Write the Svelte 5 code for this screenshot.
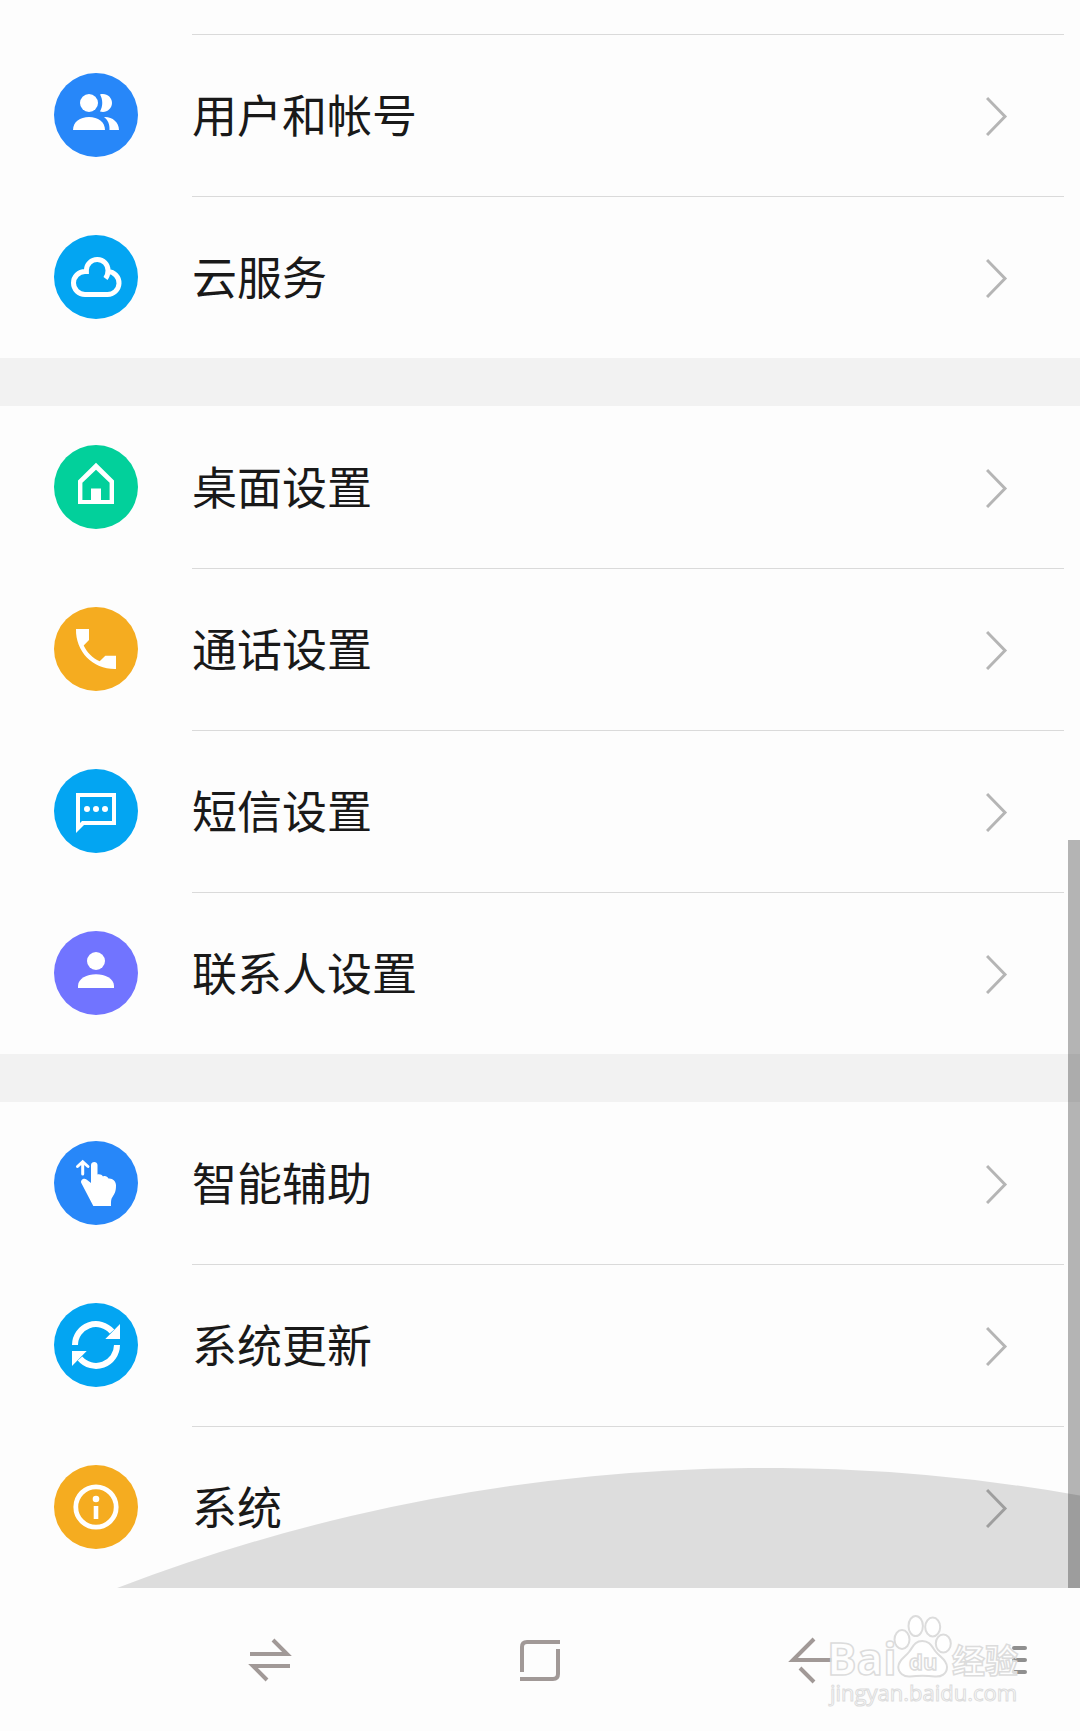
<script>
    const groups = [
        [
            { icon: "users", text: "用户和帐号", color: "#2787f9" },
            { icon: "cloud", text: "云服务", color: "#03a5f2" }
        ],
        [
            { icon: "home", text: "桌面设置", color: "#02d09b" },
            { icon: "phone", text: "通话设置", color: "#f5ac20" },
            { icon: "message", text: "短信设置", color: "#03a5f2" },
            { icon: "contact", text: "联系人设置", color: "#7174ff" }
        ],
        [
            { icon: "gesture", text: "智能辅助", color: "#2787f9" },
            { icon: "update", text: "系统更新", color: "#03a5f2" },
            { icon: "info", text: "系统", color: "#f5ac20" }
        ]
    ];

    let selected = $state("");
</script>

{#snippet glyph(name)}
    {#if name === "users"}
        <circle cx="35" cy="30" r="9" />
        <path d="M46 21.6C52 19.6 58 24 58 30S52 40.4 46 38.4C49 33.5 49 26.5 46 21.6Z" />
        <path d="M19 57C19 49 26 44 35 44S51 49 51 57Z" />
        <path d="M50 44C58 43.5 65 49 65 57H55.5C55.8 51.5 54 47 50 44Z" />
    {:else if name === "cloud"}
        <path class="line" stroke-width="5" d="M51.5 43.5C53 41.5 54 39 54 35.5A10.8 10.8 0 0 0 32.4 35V36.5H31A11.5 11.5 0 0 0 31 59.5H53A11.5 11.5 0 0 0 54 36.5" />
    {:else if name === "home"}
        <path fill-rule="evenodd" d="M42 17.7L60 35.5V59H24V35.5ZM42 24.7L28.4 37.8V55H37V43.5H47V55H55.6V37.8Z" />
    {:else if name === "phone"}
        <path d="M22 22H35V33L29.7 38.5C33 45.5 38.5 51 45.7 54.2L51.3 48.7H62V62C39 62.5 21.5 45 22 22Z" />
    {:else if name === "message"}
        <path fill-rule="evenodd" d="M22 24H62V56H30L22 64ZM26 28V54L28 52H58V28Z" />
        <circle cx="33" cy="40" r="3" />
        <circle cx="42" cy="40" r="3" />
        <circle cx="51" cy="40" r="3" />
    {:else if name === "contact"}
        <circle cx="42" cy="30" r="9" />
        <path d="M24 57V55C24 47.5 33 43.3 42 43.3S60 47.5 60 55V57Z" />
    {:else if name === "gesture"}
        <path class="line" stroke-width="3" stroke-linecap="round" d="M23.500 25.5L28.7 20.7L34 25.5M28.7 20.7V33" />
        <path d="M37 24C37 20 43.5 20 43.5 24V33.5C46 33 48 34 49 35.5C51 34.5 53.5 35.5 54.5 37.5C58.5 37 62 40 62 44.5C62 51 60.5 52.5 58.5 56C57 58 57 60 57 65H39.3L27.3 42C26 39 30 36.5 32.5 38.5L37 42Z" />
    {:else if name === "update"}
        <path class="line" stroke-width="6" d="M21 42A21 21 0 0 1 58 28.5M63 42A21 21 0 0 1 26 55.5" />
        <path d="M66 21V36H51.3ZM18 63V48H32.7Z" />
    {:else}
        <circle class="line" stroke-width="4.8" cx="42" cy="42" r="20.2" />
        <circle cx="42" cy="34" r="3.3" />
        <path d="M39.7 41H44.3V54H39.7Z" />
    {/if}
{/snippet}

<div class="screen">
    <main>
        {#each groups as group}
            <ul class="group">
                {#each group as item (item.text)}
                    <li>
                        <button class="row" onclick={() => (selected = item.text)}>
                            <svg class="icon" viewBox="0 0 84 84" aria-hidden="true">
                                <circle cx="42" cy="42" r="42" fill={item.color} />
                                {@render glyph(item.icon)}
                            </svg>
                            <span class="content">
                                <span class="label">{item.text}</span>
                                <svg class="chevron" viewBox="0 0 22 40" aria-hidden="true">
                                    <path d="M1 2L19 20.5L1 39" />
                                </svg>
                            </span>
                        </button>
                    </li>
                {/each}
            </ul>
        {/each}

        <!-- ripple coming up from the back key -->
        <svg class="ripple" viewBox="0 0 1080 120" preserveAspectRatio="none" aria-hidden="true">
            <path d="M117 120A1810 1810 0 0 1 1080 27.5V120Z" />
        </svg>
        <div class="scrollbar"></div>
    </main>

    <nav>
        <button aria-label="切换">
            <svg viewBox="0 0 48 48">
                <path d="M4 18H41L27 4M44 30H7L21 44" />
            </svg>
        </button>
        <button aria-label="主页">
            <svg viewBox="0 0 48 48">
                <path d="M6 36V11Q6 6 11 6H44M42 13V38Q42 43 37 43H4" />
            </svg>
        </button>
        <button aria-label="返回">
            <svg viewBox="0 0 48 48">
                <path d="M28 3L7 24H46M14 32L28 46" />
            </svg>
        </button>
        <button class="menu" aria-label="菜单">
            <svg viewBox="0 0 48 48">
                <path d="M26 12H37M26 24H37M26 36H37" />
            </svg>
        </button>

        <svg class="watermark" viewBox="0 0 206 100" aria-hidden="true">
            <text class="latin" x="3" y="64" font-size="44">Bai</text>
            <ellipse cx="78" cy="28.5" rx="7.5" ry="9.5" />
            <ellipse cx="91.7" cy="15" rx="7.2" ry="10" />
            <ellipse cx="108.7" cy="16" rx="7.5" ry="9.5" />
            <ellipse cx="119.3" cy="32.5" rx="7.5" ry="9" />
            <path d="M98.3 30C106 30 108 36 112 41C116 46 123 49 123 56C123 63 117 66 111 65.5C102 64.5 95 64.5 86 65.5C80 66 74.3 62 74.3 56C74.3 49 81 46 85 41C89 36 90.5 30 98.3 30Z" />
            <text class="latin" x="85" y="59" font-size="22">du</text>
            <text class="cjk" x="128" y="62" font-size="33">经验</text>
            <text class="site" x="6" y="90" font-size="22">jingyan.baidu.com</text>
        </svg>
    </nav>
</div>

<style>
:global(body) {
    margin: 0;
    background: #fdfdfd;
}

.screen {
    font-family: "Noto Sans CJK SC", sans-serif;
    color: #191919;
}

main {
    position: relative;
    padding-top: 34px;
}

.group {
    list-style: none;
    margin: 0;
    padding: 0;
}

.group + .group {
    border-top: 48px solid #f2f2f2;
}

button {
    border: 0;
    padding: 0;
    background: none;
    font: inherit;
    color: inherit;
    cursor: pointer;
}

.row {
    display: flex;
    align-items: center;
    width: 100%;
    height: 162px;
    padding: 0 16px 0 54px;
    gap: 54px;
    text-align: left;
}

.icon {
    flex: none;
    width: 84px;
    height: 84px;
    fill: white;
}

.icon .line {
    fill: none;
    stroke: white;
}

.content {
    flex: 1;
    display: flex;
    align-items: center;
    justify-content: space-between;
    box-sizing: border-box;
    height: 100%;
    padding-right: 56px;
    border-top: 1px solid #dadada;
}

.group + .group li:first-child .content {
    border-top-color: transparent;
}

.label {
    padding-bottom: 4px;
    font-size: 45px;
    line-height: 66px;
}

.chevron {
    width: 22px;
    height: 40px;
    fill: none;
    stroke: #b5b5b5;
    stroke-width: 3;
}

.ripple {
    position: absolute;
    left: 0;
    bottom: 0;
    width: 100%;
    height: 120px;
    fill: rgba(0, 0, 0, 0.125);
    pointer-events: none;
}

.scrollbar {
    position: absolute;
    right: 0;
    bottom: 0;
    width: 12px;
    height: 748px;
    background: rgba(0, 0, 0, 0.285);
}

nav {
    position: relative;
    display: flex;
    height: 143px;
    padding-left: 12.5%;
}

nav button {
    display: flex;
    align-items: center;
    justify-content: center;
    width: 28.571%;
}

nav button svg {
    width: 48px;
    height: 48px;
    fill: none;
    stroke: #a19997;
    stroke-width: 4;
}

nav .menu {
    width: 14.286%;
}

.menu svg {
    stroke: #8f8f8f;
    stroke-linecap: round;
}

.watermark {
    position: absolute;
    right: 50px;
    bottom: 20px;
    width: 206px;
    height: 100px;
    fill: white;
    fill-opacity: 0.7;
    stroke: #dcdcdc;
    stroke-width: 2;
    pointer-events: none;
}

.latin {
    font-family: "Open Sans", sans-serif;
    font-weight: bold;
    stroke-width: 1.5;
}

.cjk {
    font-family: "Noto Sans CJK SC", sans-serif;
    font-weight: bold;
    stroke-width: 1.5;
}

.site {
    font-family: "Open Sans", sans-serif;
    stroke-width: 1;
}
</style>
